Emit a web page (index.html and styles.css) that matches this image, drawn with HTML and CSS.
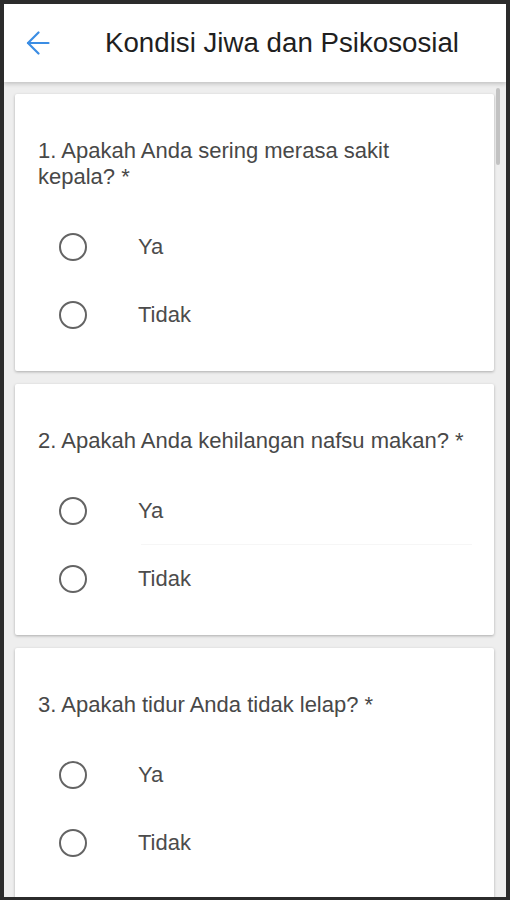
FILE: index.html
```html
<!DOCTYPE html>
<html lang="id">
<head>
<meta charset="utf-8">
<title>Kondisi Jiwa dan Psikososial</title>
<link rel="stylesheet" href="styles.css">
</head>
<body>
<div class="frame">
  <header class="appbar">
    <button class="back" aria-label="Kembali">
      <svg width="24" height="24" viewBox="0 0 24 24" fill="none" stroke="#3b8de4" stroke-width="2.2" stroke-linecap="round" stroke-linejoin="round"><path d="M22.5 12H2"/><path d="M12.5 1.5L2 12l10.5 10.5"/></svg>
    </button>
    <h1 class="title">Kondisi Jiwa dan Psikososial</h1>
  </header>
  <main class="content">
    <section class="card">
      <p class="question">1. Apakah Anda sering merasa sakit kepala? *</p>
      <label class="option"><span class="radio"></span><span class="label">Ya</span></label>
      <label class="option"><span class="radio"></span><span class="label">Tidak</span></label>
    </section>
    <section class="card">
      <p class="question">2. Apakah Anda kehilangan nafsu makan? *</p>
      <label class="option divided"><span class="radio"></span><span class="label">Ya</span></label>
      <label class="option"><span class="radio"></span><span class="label">Tidak</span></label>
    </section>
    <section class="card">
      <p class="question">3. Apakah tidur Anda tidak lelap? *</p>
      <label class="option"><span class="radio"></span><span class="label">Ya</span></label>
      <label class="option"><span class="radio"></span><span class="label">Tidak</span></label>
    </section>
  </main>
  <div class="scrollthumb"></div>
</div>
</body>
</html>
```
FILE: styles.css
```css
* { box-sizing: border-box; }
html, body { margin: 0; padding: 0; }
body {
  font-family: "Liberation Sans", Arial, sans-serif;
  background: #2a2a2a;
}
.frame {
  position: relative;
  width: 510px;
  height: 900px;
  border: 4px solid #2b2b2b;
  border-bottom-width: 3px;
  background: #eeeeee;
  overflow: hidden;
  display: flex;
  flex-direction: column;
}
.appbar {
  position: relative;
  z-index: 2;
  height: 78px;
  flex: none;
  background: #ffffff;
  display: flex;
  align-items: center;
  box-shadow: 0 2px 4px rgba(0, 0, 0, 0.18);
}
.back {
  border: 0;
  background: none;
  padding: 0;
  margin-left: 22px;
  width: 24px;
  height: 24px;
  display: flex;
}
.title {
  margin: 0 0 0 55px;
  font-size: 27.7px;
  font-weight: normal;
  color: #1f1f1f;
  line-height: 34px;
}
.content {
  padding: 12px 12px 0 11px;
  display: flex;
  flex-direction: column;
  gap: 13px;
}
.card {
  background: #ffffff;
  border-radius: 2px;
  box-shadow: 0 1px 3px rgba(0, 0, 0, 0.28);
  padding: 44px 22px 22px 23px;
}
.question {
  margin: 0 0 23px 0;
  font-size: 22px;
  line-height: 26px;
  color: #484848;
}
.option {
  height: 68px;
  display: flex;
  align-items: center;
  padding-left: 21px;
}
.divided { position: relative; }
.divided::after {
  content: "";
  position: absolute;
  left: 103px;
  right: 0;
  bottom: 0;
  height: 1px;
  background: #f6f6f6;
}
.radio {
  width: 28px;
  height: 28px;
  border: 2.4px solid #646464;
  border-radius: 50%;
  flex: none;
}
.label {
  margin-left: 51px;
  font-size: 22px;
  color: #4c4c4c;
}
.scrollthumb {
  position: absolute;
  top: 84px;
  left: 492px;
  width: 4px;
  height: 77px;
  background: #c2c2c2;
  border-radius: 2px;
  z-index: 3;
}
```
